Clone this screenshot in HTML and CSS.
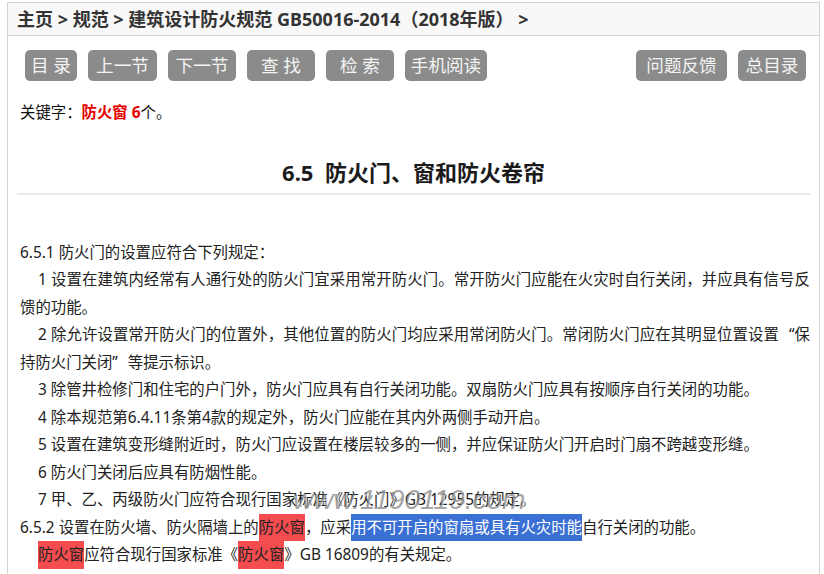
FILE: index.html
```html
<!DOCTYPE html>
<html lang="zh-CN">
<head>
    <meta charset="UTF-8">
    <meta name="viewport" content="width=device-width, initial-scale=1.0">
    <title>建筑设计防火规范 6.5 防火门、窗和防火卷帘</title>
    <link rel="stylesheet" href="styles.css">
</head>
<body>
    <div class="page">
        <div class="crumbs">主页 &gt; 规范 &gt; 建筑设计防火规范 GB50016-2014（2018年版） &gt;</div>

        <div class="toolbar">
            <div class="btn-group">
                <a class="btn w52" href="#">目 录</a>
                <a class="btn w69" href="#">上一节</a>
                <a class="btn w68" href="#">下一节</a>
                <a class="btn w68" href="#">查 找</a>
                <a class="btn w68" href="#">检 索</a>
                <a class="btn w82" href="#">手机阅读</a>
            </div>
            <div class="btn-group">
                <a class="btn w91" href="#">问题反馈</a>
                <a class="btn w68" href="#">总目录</a>
            </div>
        </div>

        <p class="keyword">关键字：<b>防火窗 6</b>个。</p>

        <h2 class="title">6.5&nbsp;&nbsp;防火门、窗和防火卷帘</h2>

        <div class="article">
            <p>6.5.1 防火门的设置应符合下列规定：</p>
            <p class="item">1 设置在建筑内经常有人通行处的防火门宜采用常开防火门。常开防火门应能在火灾时自行关闭，并应具有信号反馈的功能。</p>
            <p class="item">2 除允许设置常开防火门的位置外，其他位置的防火门均应采用常闭防火门。常闭防火门应在其明显位置设置<span class="q q-open">“</span>保持防火门关闭<span class="q q-close">”</span>等提示标识。</p>
            <p class="item">3 除管井检修门和住宅的户门外，防火门应具有自行关闭功能。双扇防火门应具有按顺序自行关闭的功能。</p>
            <p class="item">4 除本规范第6.4.11条第4款的规定外，防火门应能在其内外两侧手动开启。</p>
            <p class="item">5 设置在建筑变形缝附近时，防火门应设置在楼层较多的一侧，并应保证防火门开启时门扇不跨越变形缝。</p>
            <p class="item">6 防火门关闭后应具有防烟性能。</p>
            <p class="item">7 甲、乙、丙级防火门应符合现行国家标准《防火门》GB 12955的规定。</p>
            <p>6.5.2 设置在防火墙、防火隔墙上的<span class="hit">防火窗</span>，应采<span class="sel">用不可开启的窗扇或具有火灾时能</span>自行关闭的功能。</p>
            <p class="item"><span class="hit">防火窗</span>应符合现行国家标准《<span class="hit">防火窗</span>》GB 16809的有关规定。</p>
        </div>

        <div class="watermark">www.1190119.com</div>
    </div>
</body>
</html>
```

FILE: styles.css
```css
body {
    margin: 2px 4px 0 7px;
    background-color: #fff;
    color: #222;
    font-family: "Noto Sans", "Noto Sans CJK SC", sans-serif;
}

.page {
    position: relative;
    border: 1px solid #d2d2d2;
    border-bottom: none;
    height: 600px;
}

.crumbs {
    height: 32px;
    line-height: 32px;
    padding-left: 9px;
    background-color: #f8f8f8;
    border-bottom: 1px solid #d2d2d2;
    font-size: 18px;
    font-weight: bold;
    color: #333;
    white-space: nowrap;
}

.toolbar {
    display: flex;
    justify-content: space-between;
    padding: 14px 13px 0 17px;
}

.btn-group {
    display: flex;
    gap: 11px;
}

.btn {
    display: block;
    height: 31px;
    line-height: 31px;
    text-align: center;
    background-color: #8b8b8b;
    color: #f4f4f4;
    border-radius: 5px;
    font-size: 17.6px;
    text-decoration: none;
    white-space: pre;
}

.w52 { width: 52px; }
.w68 { width: 68px; }
.w69 { width: 69px; }
.w82 { width: 82px; }
.w91 { width: 91px; }

.keyword {
    margin: 18px 0 0;
    padding-left: 12px;
    font-size: 15.4px;
    line-height: 27.5px;
    color: #111;
}

.keyword b {
    color: #e60000;
}

.title {
    margin: 30px 9px 0;
    padding-bottom: 6px;
    border-bottom: 2px solid #e9e9e9;
    text-align: center;
    font-size: 22px;
    line-height: 30px;
    font-weight: bold;
    color: #1a1a1a;
}

.article {
    margin-top: 44px;
    padding: 0 9px 0 12px;
    font-size: 15.4px;
    line-height: 27.5px;
    text-align: justify;
}

.article p {
    margin: 0;
}

.article .item {
    text-indent: 18px;
}

/* full-width quotation marks */
.q {
    display: inline-block;
    width: 1em;
    text-indent: 0;
}

.q-open { text-align: right; }
.q-close { text-align: left; }

.hit {
    display: inline-block;
    text-indent: 0;
    background-color: #f44c4f;
}

.sel {
    display: inline-block;
    background-color: #3a6fd4;
    color: #fff;
}

.watermark {
    position: absolute;
    left: 285px;
    top: 483px;
    font-family: "Liberation Sans", sans-serif;
    font-size: 28px;
    line-height: 1;
    font-style: italic;
    color: rgba(105, 105, 105, 0.62);
    text-shadow: 1px 1px 0 rgba(255, 255, 255, 0.6);
    white-space: nowrap;
}
```
